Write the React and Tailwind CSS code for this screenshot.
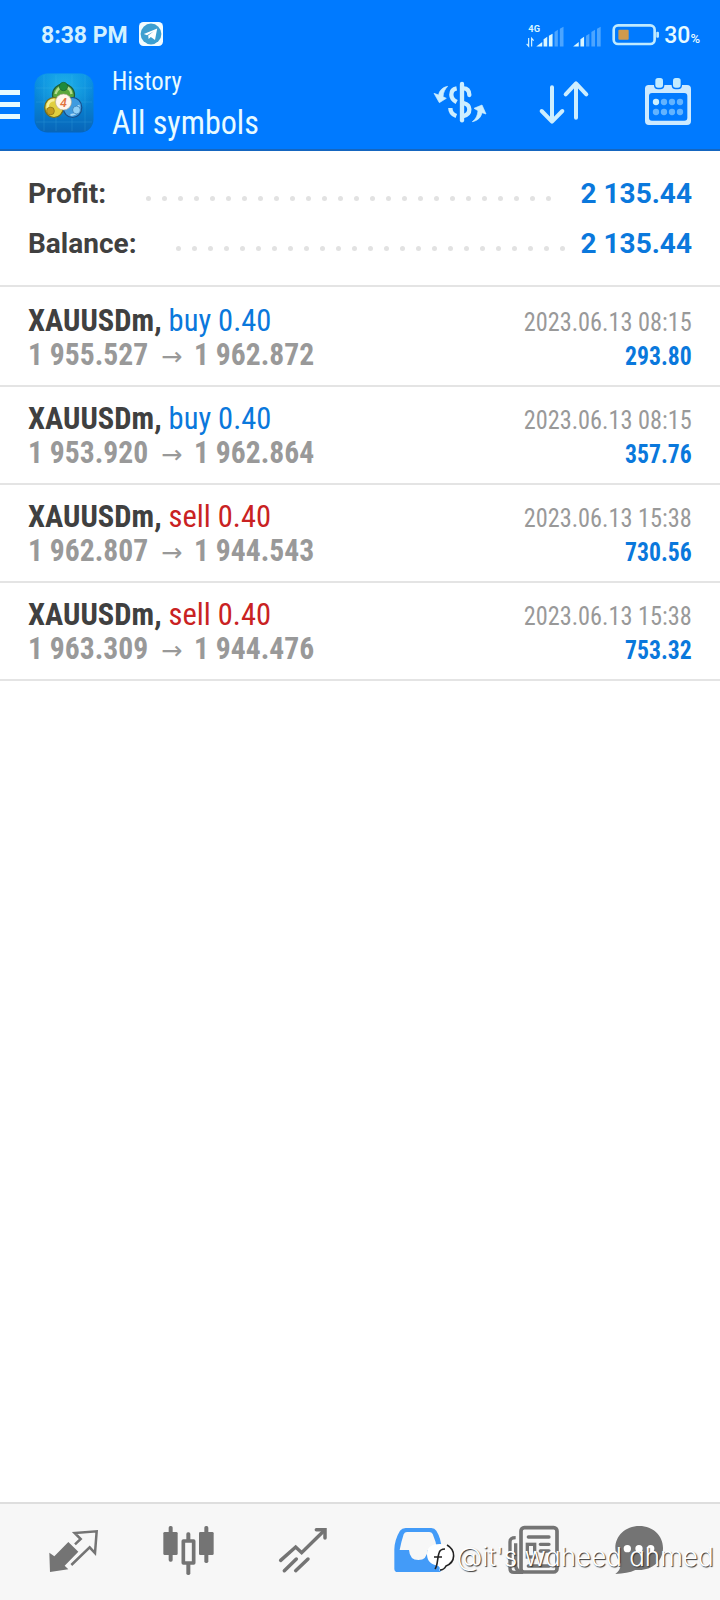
import React from 'react';

const trades = [
  { symbol: 'XAUUSDm', side: 'buy', volume: '0.40', open: '1 955.527', close: '1 962.872', time: '2023.06.13 08:15', profit: '293.80' },
  { symbol: 'XAUUSDm', side: 'buy', volume: '0.40', open: '1 953.920', close: '1 962.864', time: '2023.06.13 08:15', profit: '357.76' },
  { symbol: 'XAUUSDm', side: 'sell', volume: '0.40', open: '1 962.807', close: '1 944.543', time: '2023.06.13 15:38', profit: '730.56' },
  { symbol: 'XAUUSDm', side: 'sell', volume: '0.40', open: '1 963.309', close: '1 944.476', time: '2023.06.13 15:38', profit: '753.32' },
];

const summary = [
  { label: 'Profit:', value: '2 135.44', dots: 26, labelClass: 'w-[118px]' },
  { label: 'Balance:', value: '2 135.44', dots: 25, labelClass: 'w-[148px]' },
];

const TelegramIcon = () => (
  <svg viewBox="0 0 24 24" className="h-6 w-6">
    <rect width="24" height="24" rx="4.5" fill="#f2fcff" />
    <circle cx="12" cy="12" r="10.4" fill="#3d9fd0" />
    <path d="M4.8 12 L18.2 6.6 L16 18 L11.8 15 L9.6 17 L9.2 13.6 L14.8 9.2 L8 13.2 Z" fill="#fff" />
  </svg>
);

const SignalIcons = () => (
  <svg viewBox="320 60 232 78" className="h-[26px] w-[77px]" fill="#d9f6ff">
    <text x="330" y="90" fontSize="28" fontWeight="700" fontFamily="Roboto">4G</text>
    <path d="M331 108 V133 L325 126 M340 134 V109 L346 116" fill="none" stroke="#d9f6ff" strokeWidth="3.5" />
    <path d="M354 134 L372 120 V134 Z" />
    <path d="M376 134 V112 L387 104 V134 Z" />
    <path d="M392 134 V101 L403 95 V134 Z" />
    <path d="M409 134 V90 L419 83 V134 Z M425 134 V80 L436 74 V134 Z" opacity="0.35" />
    <path d="M465 134 L482 120 V134 Z" />
    <path d="M487 134 V112 L498 104 V134 Z" />
    <path d="M504 134 V101 L514 95 V134 Z M520 134 V90 L531 83 V134 Z M537 134 V80 L548 74 V134 Z" opacity="0.35" />
  </svg>
);

const BatteryIcon = () => (
  <svg viewBox="578 70 144 70" className="h-[23.3px] w-[48px]">
    <rect x="583" y="77" width="123" height="56" rx="13" fill="none" stroke="#bfeaff" strokeWidth="8" />
    <rect x="711" y="96" width="8" height="18" rx="3" fill="#bfeaff" />
    <rect x="597" y="90" width="31" height="30" rx="3" fill="#d09a4c" />
  </svg>
);

const AppLogo = () => (
  <svg viewBox="0 0 60 60" className="h-[60px] w-[60px]">
    <defs>
      <linearGradient id="bg" x1="0" y1="0" x2="0" y2="1">
        <stop offset="0" stopColor="#0a92e6" />
        <stop offset="0.55" stopColor="#0880d0" />
        <stop offset="1" stopColor="#0865b8" />
      </linearGradient>
      <radialGradient id="glow" cx="0.5" cy="0.25" r="0.5">
        <stop offset="0" stopColor="#2cc4ea" stopOpacity="0.7" />
        <stop offset="1" stopColor="#2cc4ea" stopOpacity="0" />
      </radialGradient>
    </defs>
    <rect x="0.5" y="0.5" width="59" height="59" rx="13" fill="url(#bg)" />
    <rect x="0.5" y="0.5" width="59" height="59" rx="13" fill="url(#glow)" />
    <path d="M10 2 V58 M22 2 V58 M38 2 V58 M51 2 V58 M2 15 H58 M2 29 H58 M2 49 H58" stroke="#5cc8f0" strokeWidth="0.5" opacity="0.35" />
    <g transform="translate(-0.5 -1)">
      <circle cx="30" cy="23" r="11" fill="#5aa63c" stroke="#1d5c3c" strokeWidth="1.2" />
      <path d="M22 22 Q24 15 30 15 Q37 15 38 22" fill="none" stroke="#b4dd90" strokeWidth="2.4" />
      <circle cx="30" cy="14.5" r="4.2" fill="#1f8a3c" stroke="#14582e" strokeWidth="0.6" />
      <ellipse cx="20.5" cy="35.5" rx="9.3" ry="10" fill="#e0cf3f" stroke="#6d6a21" strokeWidth="1.2" />
      <path d="M14 36 Q14 28 21 28" fill="none" stroke="#f6ef9a" strokeWidth="2.4" />
      <circle cx="17" cy="39" r="3.9" fill="#c49d1f" stroke="#7a6417" strokeWidth="0.6" />
      <ellipse cx="39" cy="35.5" rx="9.3" ry="10" fill="#3f9be0" stroke="#174f8c" strokeWidth="1.2" />
      <path d="M45 33 Q47 42 37 43" fill="none" stroke="#a8d8f7" strokeWidth="2" />
      <circle cx="43" cy="38" r="3.9" fill="#8fd0f8" stroke="#2468a5" strokeWidth="0.6" />
      <circle cx="30" cy="30" r="8" fill="#fff6ec" stroke="#a9a58a" strokeWidth="0.6" />
      <text x="30" y="34.5" textAnchor="middle" fontSize="12.5" fontWeight="500" fontStyle="italic" fontFamily="Roboto" fill="#e0713c">4</text>
    </g>
  </svg>
);

const DollarIcon = () => (
  <svg viewBox="36 240 168 132" className="h-[44px] w-[56px]" fill="none" stroke="#cdeeff">
    <path d="M126 252 V361" strokeWidth="13" strokeLinecap="round" />
    <path d="M148 285 C148 272 141 265 131 265" strokeWidth="13" strokeLinecap="round" />
    <path d="M110 265 C99 267 94 274 94 284 C94 295 101 301 110 306" strokeWidth="13" />
    <path d="M130 309 C142 312 148 318 148 328 C148 339 142 346 130 348" strokeWidth="13" />
    <path d="M91 324 C91 336 98 344 109 348" strokeWidth="13" />
    <path d="M83 259 C68 262 58 271 56 285 L42 280 L58 308 L79 295 L69 290 C70 277 75 267 83 259 Z" fill="#cdeeff" strokeWidth="2" strokeLinejoin="round" />
    <path d="M157 365 C173 362 183 352 186 338 L198 342 L186 315 L162 325 L174 332 C173 346 168 357 157 365 Z" fill="#cdeeff" strokeWidth="2" strokeLinejoin="round" />
  </svg>
);

const SortIcon = () => (
  <svg viewBox="354 240 156 135" className="h-[45px] w-[52px]" fill="none" stroke="#cdeeff" strokeWidth="12" strokeLinecap="round" strokeLinejoin="round">
    <path d="M396 262 V364 M365 333 L396 365 L427 333" />
    <path d="M468 353 V252 M437 283 L468 250 L499 283" />
  </svg>
);

const CalendarIcon = () => (
  <svg viewBox="672 231 144 147" className="h-[49px] w-[48px]">
    <path fillRule="evenodd" fill="#cdeaff" d="M686 255 H801 Q813 255 813 267 V363 Q813 375 801 375 H687 Q675 375 675 363 V266 Q675 255 686 255 Z M696 279 Q687 279 687 288 V353 Q687 362 696 362 H793 Q802 362 802 353 V288 Q802 279 793 279 Z" />
    <rect x="702" y="231" width="31" height="37" rx="12" fill="#007aff" />
    <rect x="755" y="231" width="31" height="37" rx="12" fill="#007aff" />
    <rect x="706" y="234" width="23" height="29" rx="8" fill="#c3ecff" />
    <rect x="759" y="234" width="23" height="29" rx="8" fill="#c3ecff" />
    <g fill="#62b3ff">
      <circle cx="708" cy="306" r="9.5" fill="#cdf0ff" />
      <circle cx="732" cy="306" r="9.5" />
      <circle cx="756" cy="306" r="9.5" />
      <circle cx="780" cy="306" r="9.5" />
      <circle cx="708" cy="336" r="9.5" />
      <circle cx="732" cy="336" r="9.5" />
      <circle cx="756" cy="336" r="9.5" />
      <circle cx="780" cy="336" r="9.5" />
    </g>
  </svg>
);

const QuotesIcon = () => (
  <svg viewBox="144 102 156 156" className="h-[52px] w-[52px]">
    <path d="M148 188 L163 199 L205 156 L235 185 L194 227 L205 238 L150 246 Z" fill="#747474" />
    <path d="M225 163 L242 147 L224 129 L290 124 L285 189 L269 172 L214 225" fill="none" stroke="#747474" strokeWidth="7.5" />
  </svg>
);

const ChartIcon = () => (
  <svg viewBox="489 102 156 156" className="h-[52px] w-[52px]" fill="#747474">
    <rect x="506" y="108" width="12" height="107" rx="5" />
    <rect x="490" y="126" width="43" height="69" rx="4" />
    <rect x="613" y="108" width="12" height="111" rx="5" />
    <rect x="597" y="126" width="44" height="69" rx="4" />
    <rect x="559" y="127" width="12" height="128" rx="5" />
    <rect x="550" y="153" width="31" height="66" fill="#f7f7f7" stroke="#747474" strokeWidth="11" strokeLinejoin="round" />
  </svg>
);

const TradeIcon = () => (
  <svg viewBox="834 102 156 156" className="h-[52px] w-[52px]" fill="none" stroke="#747474" strokeWidth="10.5" strokeLinecap="round">
    <path d="M842 211 L887 171 L905 188 L972 122" strokeLinejoin="miter" />
    <path d="M949 119 H975 V144" strokeLinejoin="miter" />
    <path d="M853 242 L889 207 M887 242 L924 207" />
  </svg>
);

const HistoryIcon = () => (
  <svg viewBox="99 102 156 156" className="h-[52px] w-[52px]">
    <path fillRule="evenodd" fill="#439bf8" d="M137 114 H214 Q224 114 229 122 Q244 146 245 178 V236 Q245 246 235 246 H113 Q103 246 103 236 V178 Q104 148 120 122 Q126 114 137 114 Z M141 126 Q134 126 131 133 Q123 158 119 180 H147 Q149 210 175 210 Q201 210 203 180 H231 Q228 153 218 132 Q215 126 208 126 Z" />
  </svg>
);

const NewsIcon = () => (
  <svg viewBox="444 102 156 156" className="h-[52px] w-[52px]" fill="none" stroke="#747474">
    <rect x="483" y="113" width="108" height="133" rx="10" strokeWidth="11" />
    <path d="M467 143 Q450 143 450 155 V236 Q450 247 462 247 H490 M467 160 V226 Q467 246 490 246" strokeWidth="10" />
    <path d="M505 141 H567 M541 163 H567 M541 183 H567 M505 228 H567" strokeWidth="10" strokeLinecap="round" />
    <rect x="502" y="163" width="22" height="38" strokeWidth="10" />
  </svg>
);

const ChatIcon = () => (
  <svg viewBox="765 102 156 156" className="h-[52px] w-[52px]">
    <path d="M838 108 C880 108 909 138 909 174 C909 214 876 240 838 240 L826 240 C810 248 790 251 766 252 Q781 241 783 222 C771 208 766 192 766 174 C766 138 796 108 838 108 Z" fill="#747474" />
    <circle cx="802" cy="176" r="11" fill="#fff" />
    <circle cx="837" cy="176" r="11" fill="#fff" />
    <circle cx="872" cy="176" r="11" fill="#fff" />
  </svg>
);

const Watermark = () => (
  <div className="absolute top-[1539px] left-[427px] flex h-9 items-center">
    <svg viewBox="0 0 28 32" className="h-8 w-7">
      <path d="M13 3 C21 3 27 8 27 15 C27 21 23 24 17 26 L12 30 C14 26 12 25 8 24 C2 22 0 18 0 13 C0 6 5 3 13 3 Z" fill="#fff" />
      <path d="M8 28 C11 24 10 18 12 12 Q13 8 18 8 M7 16 H15" fill="none" stroke="#222" strokeWidth="1.6" />
      <path d="M20 4 C29 9 29 21 19 25 Q17 29 13 29" fill="none" stroke="#222" strokeWidth="1.6" />
    </svg>
    <span className="ml-0.5 font-['Inter'] text-[26px] leading-9 font-light whitespace-nowrap text-white [font-feature-settings:'cv11'] [text-shadow:1px_1px_1px_#333]">@it's waheed ahmed</span>
  </div>
);

const TradeRow = ({ trade }) => (
  <li className="flex h-[98px] justify-between border-b-2 border-[#e4e4e4] px-7 whitespace-nowrap [font-stretch:75%]">
    <div className="pt-3.5 text-[32px] leading-[34px]">
      <div className="origin-left scale-x-[0.953]">
        <span className="font-bold text-[#404040]">{trade.symbol},</span>{' '}
        <span className={trade.side === 'buy' ? 'text-[#0a78dc]' : 'text-[#c92222]'}>{trade.side} {trade.volume}</span>
      </div>
      <div className="flex font-bold text-[#999]">
        <span className="w-[133px] origin-left scale-x-[0.925]">{trade.open}</span>
        <span className="w-[33px] origin-left scale-x-[1.13] pt-[3px] font-['DejaVu_Sans'] text-[25px] font-normal">→</span>
        <span className="origin-left scale-x-[0.925]">{trade.close}</span>
      </div>
    </div>
    <div className="pt-4 text-right text-[26px] leading-[34px]">
      <div className="origin-right scale-x-[0.935] text-[#999]">{trade.time}</div>
      <div className="origin-right scale-x-[0.91] font-bold text-[#0a78dc]">{trade.profit}</div>
    </div>
  </li>
);

export default function App() {
  return (
    <div className="relative flex h-[1600px] w-[720px] flex-col overflow-hidden bg-white font-['Roboto',sans-serif]">
      <header className="h-[151px] shrink-0 border-b-2 border-[#1566c0] bg-[#007aff] text-[#e8fbff]">
        <div className="flex h-[60px] items-center pt-2.5 pr-5 pl-[41px]">
          <span className="w-[98px] pt-0.5 text-[23px] leading-6 font-bold text-[#d3f1ff]">8:38 PM</span>
          <div className="-mt-0.5"><TelegramIcon /></div>
          <div className="ml-auto flex items-center">
            <SignalIcons />
            <div className="ml-2.5"><BatteryIcon /></div>
            <span className="ml-1 pt-1 text-[23px] leading-6 font-medium">30<span className="text-[13px]">%</span></span>
          </div>
        </div>
        <div className="flex h-[89px]">
          <div className="mt-[30px] flex w-5 flex-col gap-[7px]">
            <div className="h-[5px] bg-[#e8fbff]" />
            <div className="h-[5px] bg-[#e8fbff]" />
            <div className="h-[5px] bg-[#e8fbff]" />
          </div>
          <div className="mt-[13px] ml-3.5"><AppLogo /></div>
          <div className="ml-[18px] whitespace-nowrap [font-stretch:75%]">
            <div className="origin-left scale-x-[0.95] text-[26px] leading-[42px]">History</div>
            <div className="origin-left scale-x-[0.945] text-[34px] leading-[40px]">All symbols</div>
          </div>
          <div className="mt-[17px] mr-7 ml-auto flex">
            <div className="mt-[3px] mr-[50px]"><DollarIcon /></div>
            <div className="mt-[3px] mr-[54px]"><SortIcon /></div>
            <CalendarIcon />
          </div>
        </div>
      </header>

      <section className="h-[136px] shrink-0 border-b-2 border-[#e4e4e4] px-7 pt-[17.5px]">
        {summary.map((item) => (
          <div key={item.label} className="flex h-[50px] items-center text-[28px] font-bold">
            <span className={`${item.labelClass} text-[#404040]`}>{item.label}</span>
            <div className="mt-[10px] flex gap-[11px]">
              {Array.from({ length: item.dots }, (_, i) => (
                <span key={i} className="h-[5px] w-[5px] rounded-full bg-[#e2e2e2]" />
              ))}
            </div>
            <span className="ml-auto text-[#0a78dc]">{item.value}</span>
          </div>
        ))}
      </section>

      <ul className="flex-1 pt-0.5">
        {trades.map((trade) => <TradeRow key={trade.open} trade={trade} />)}
      </ul>

      <nav className="flex h-[98px] shrink-0 gap-[63px] border-t-2 border-[#dedede] bg-[#f7f7f7] pt-5 pl-12">
        <QuotesIcon />
        <ChartIcon />
        <TradeIcon />
        <HistoryIcon />
        <NewsIcon />
        <div className="-ml-2"><ChatIcon /></div>
      </nav>

      <Watermark />
    </div>
  );
}
